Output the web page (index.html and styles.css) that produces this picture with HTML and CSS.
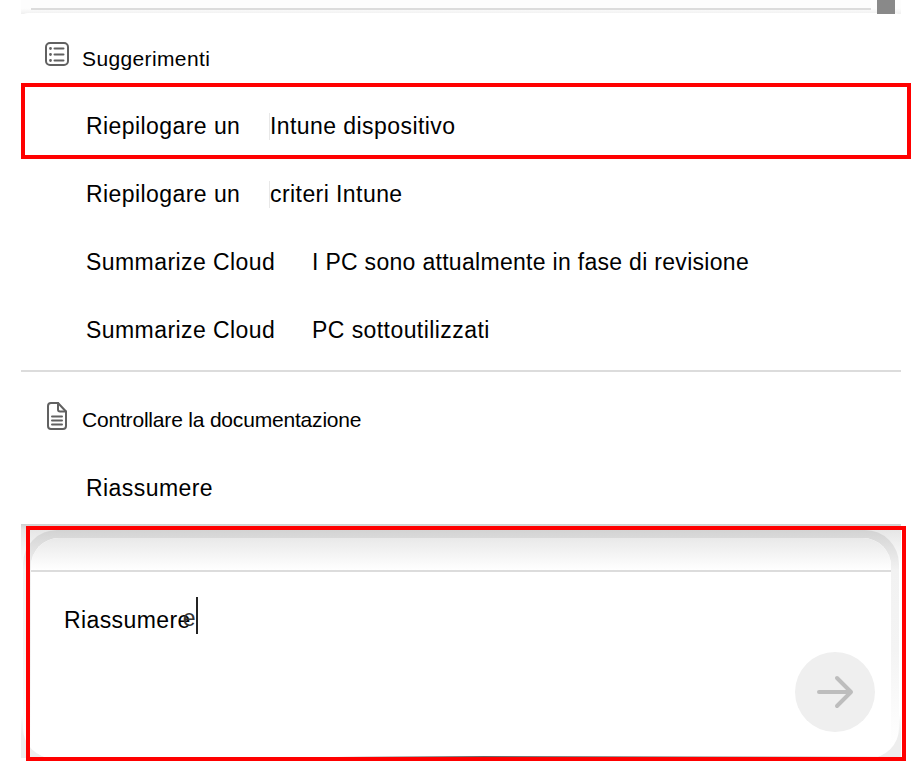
FILE: index.html
```
<!DOCTYPE html>
<html lang="it">
<head>
    <meta charset="UTF-8">
    <meta name="viewport" content="width=device-width, initial-scale=1.0">
    <title>Suggerimenti</title>
    <link rel="stylesheet" href="styles.css">
</head>
<body>

    <main class="copilot">
        <div class="chat-edge">
            <div class="chat-line"></div>
            <div class="scroll-thumb"></div>
        </div>

        <section class="suggestions">
            <div class="section-title">
                <svg class="icon" width="28" height="28" viewBox="0 0 28 28" fill="none" stroke="#616161" stroke-width="2" stroke-linecap="round">
                    <rect x="3" y="3" width="22" height="22" rx="4"/>
                    <path d="M11.5 8.500h9M11.500 14.500h9M11.500 20.500h9"/>
                    <path d="M7.500 8.500h.01M7.500 14.500h.01M7.500 20.500h.01" stroke-width="2.800"/>
                </svg>
                <h2>Suggerimenti</h2>
            </div>
            <ul class="prompt-list">
                <li class="prompt highlighted">
                    <span class="prompt-start">Riepilogare un</span>
                    <span class="prompt-end mark">Intune dispositivo</span>
                </li>
                <li class="prompt">
                    <span class="prompt-start">Riepilogare un</span>
                    <span class="prompt-end mark">criteri Intune</span>
                </li>
                <li class="prompt">
                    <span class="prompt-start wide">Summarize Cloud</span>
                    <span class="prompt-end long">I PC sono attualmente in fase di revisione</span>
                </li>
                <li class="prompt">
                    <span class="prompt-start wide">Summarize Cloud</span>
                    <span class="prompt-end">PC sottoutilizzati</span>
                </li>
            </ul>

            <div class="section-title docs">
                <svg class="icon" width="28" height="32" viewBox="0 0 28 32" fill="none" stroke="#616161" stroke-width="2" stroke-linecap="round" stroke-linejoin="round">
                    <path d="M8 3h7l8 8.500V26a3 3 0 0 1-3 3H8a3 3 0 0 1-3-3V6a3 3 0 0 1 3-3z"/>
                    <path d="M15 3v6.500a2 2 0 0 0 2 2h6M9 16.500h10M9 20.500h10M9 24.500h10"/>
                </svg>
                <h2>Controllare la documentazione</h2>
            </div>
            <ul class="prompt-list">
                <li class="prompt">
                    <span class="prompt-start">Riassumere</span>
                </li>
            </ul>
        </section>

        <section class="composer-area">
            <div class="composer-frame">
                <div class="composer">
                    <div class="composer-head"></div>
                    <div class="composer-input">
                        <span class="typed">Riassumere<span class="ghost">e</span></span>
                    </div>
                    <button class="send-button" type="button" aria-label="Invia">
                        <svg width="40" height="40" viewBox="0 0 40 40" fill="none" stroke="#bdbdbd" stroke-width="4" stroke-linecap="round" stroke-linejoin="round">
                            <path d="M4 20h32M22 6l14 14L22 34"/>
                        </svg>
                    </button>
                </div>
            </div>
            <div class="composer-highlight"></div>
        </section>
    </main>

</body>
</html>
```

FILE: styles.css
```
* {
    box-sizing: border-box;
}

body {
    margin: 0;
    min-height: 776px;
    font-family: "Liberation Sans", Arial, sans-serif;
    background-color: #fff;
    color: #000;
}

.copilot {
    width: 880px;
    height: 776px;
    margin-left: 21px;
}

.chat-edge {
    display: flex;
    align-items: flex-start;
    height: 14px;
    padding-left: 10px;
    background: linear-gradient(#fdfdfd 60%, #f0f0f0);
}

.chat-line {
    width: 840px;
    height: 2px;
    margin-top: 8px;
    background-color: #dcdcdc;
}

.scroll-thumb {
    width: 18px;
    height: 14px;
    margin-left: 6px;
    background-color: #898989;
}

.suggestions {
    height: 510px;
    padding-top: 24px;
    background-color: #fff;
    border-radius: 7px;
    box-shadow: 0 0 0 1px #fff;
}

.section-title {
    display: flex;
    height: 54px;
    padding-left: 22px;
}

.section-title .icon {
    flex: none;
    margin-top: 2px;
}

.section-title h2 {
    margin: 8px 0 0 11px;
    font-size: 21px;
    font-weight: normal;
    letter-spacing: 0.37px;
    line-height: 26px;
}

.prompt-list {
    margin: 0;
    padding: 0;
    list-style: none;
}

.prompt {
    display: flex;
    align-items: center;
    height: 68px;
    padding-left: 65px;
    font-size: 23px;
    letter-spacing: 0.43px;
    white-space: nowrap;
}

.prompt-start {
    width: 184px;
}

.prompt-start.wide {
    width: 226px;
}

.prompt-end.mark {
    box-shadow: -1px 0 #e8e8e8;
}

.prompt-end.long {
    letter-spacing: 0.3px;
}

.highlighted {
    width: 890px;
    height: 76px;
    margin: -9px 0 1px;
    padding: 10px 0 0 61px;
    border: 4px solid #f00;
}

.section-title.docs {
    height: 84px;
    margin-top: 6px;
    padding-top: 28px;
    border-top: 2px solid #dcdcdc;
}

.section-title.docs .icon {
    margin-top: 0;
}

.section-title.docs h2 {
    margin-top: 7px;
    letter-spacing: -0.19px;
}

.composer-area {
    position: relative;
    height: 234px;
    padding: 6px 2px 0;
    background: linear-gradient(#cfcfcf, #e6e6e6 6px, #fff 40px, #fff 190px, #eee 210px);
}

.composer-frame {
    height: 228px;
    padding: 8px 8px 0;
    background: linear-gradient(#d3d3d3, #dedede 14px, #f2f2f2 40px, #f4f4f4 120px, #fff 215px);
    border-radius: 34px 34px 30px 30px;
}

.composer {
    display: flex;
    flex-direction: column;
    height: 220px;
    background-color: #fff;
    border-radius: 28px 28px 20px 20px;
    overflow: hidden;
}

.composer-head {
    flex: none;
    height: 34px;
    background: linear-gradient(#e9e9e9, #fff);
    border-bottom: 2px solid #dcdcdc;
}

.composer-input {
    height: 80px;
    padding: 25px 0 0 33px;
}

.typed {
    position: relative;
    display: inline-block;
    width: 134px;
    height: 37px;
    border-right: 2px solid #242424;
    font-size: 23px;
    letter-spacing: 0.4px;
    line-height: 46px;
}

.ghost {
    position: absolute;
    top: -2px;
    right: 0;
    color: #333;
}

.send-button {
    display: flex;
    align-items: center;
    justify-content: center;
    width: 80px;
    height: 80px;
    margin: 0 16px 0 auto;
    padding: 0;
    border: none;
    border-radius: 50%;
    background-color: #efefef;
}

/* red outline around the prompt box, with the thin dark edge just above its bottom side */
.composer-highlight {
    position: absolute;
    top: 2px;
    left: 5px;
    width: 880px;
    height: 235px;
    border: 4px solid #f00;
    background: linear-gradient(90deg, transparent 35%, #666 52%, #b5b5b5 75%, transparent) left bottom / 100% 1px no-repeat;
    pointer-events: none;
}
```
